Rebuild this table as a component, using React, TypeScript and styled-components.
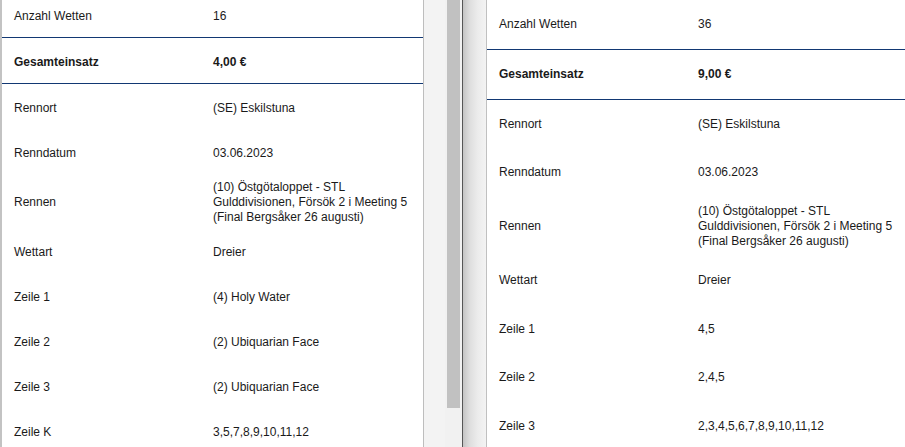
import styled, { createGlobalStyle } from "styled-components";

const GlobalStyle = createGlobalStyle`
  html, body {
    margin: 0;
    padding: 0;
    background: #ffffff;
  }
  body {
    font-family: "Liberation Sans", Arial, sans-serif;
    font-size: 12px;
    color: #1a1a1a;
  }
`;

const Page = styled.div`
  display: flex;
  width: 905px;
  height: 447px;
  overflow: hidden;
`;

const Pane = styled.div<{ $side: "left" | "right" }>`
  background: #ffffff;
  overflow: hidden;
  box-sizing: border-box;
  ${({ $side }) =>
    $side === "left"
      ? `
    width: 424px;
    border-left: 2px solid #c3c3c3;
    border-right: 1px solid #bdbdbd;
  `
      : `
    flex: 1;
    min-width: 0;
  `}
`;

const List = styled.div<{ $offset: number }>`
  margin-top: ${({ $offset }) => $offset}px;
`;

const Row = styled.div<{ $h: number; $pad: number; $shift: number; $line?: boolean; $bold?: boolean }>`
  display: grid;
  grid-template-columns: 199px 1fr;
  align-items: center;
  box-sizing: content-box;
  min-height: ${({ $h, $pad }) => $h - $pad * 2}px;
  padding: ${({ $pad, $shift }) => $pad + $shift}px 8px ${({ $pad, $shift }) => $pad - $shift}px 12px;
  line-height: 15px;
  font-weight: ${({ $bold }) => ($bold ? 700 : 400)};
  border-bottom: ${({ $line }) => ($line ? "1px solid #123873" : "none")};
`;

const Label = styled.div``;

const Value = styled.div``;

const Gutter = styled.div`
  width: 21px;
  background: #f3f3f3;
`;

const Track = styled.div`
  width: 17px;
  background: #f1f1f1;
  display: flex;
  justify-content: center;
`;

const Thumb = styled.div`
  width: 13px;
  height: 408px;
  background: #c1c1c1;
`;

const Divider = styled.div`
  width: 1px;
  background: #555555;
`;

const Shadow = styled.div`
  width: 23px;
  background: linear-gradient(to right, #c4c4c4 0%, #dedede 30%, #ececec 65%, #f3f3f3 100%);
  border-right: 1px solid #c0c0c0;
`;

type Item = { label: string; value: React.ReactNode; line?: boolean; bold?: boolean };

const leftItems: Item[] = [
  { label: "Anzahl Wetten", value: "16", line: true },
  { label: "Gesamteinsatz", value: "4,00 €", line: true, bold: true },
  { label: "Rennort", value: "(SE) Eskilstuna" },
  { label: "Renndatum", value: "03.06.2023" },
  {
    label: "Rennen",
    value: "(10) Östgötaloppet - STL Gulddivisionen, Försök 2 i Meeting 5 (Final Bergsåker 26 augusti)",
  },
  { label: "Wettart", value: "Dreier" },
  { label: "Zeile 1", value: "(4) Holy Water" },
  { label: "Zeile 2", value: "(2) Ubiquarian Face" },
  { label: "Zeile 3", value: "(2) Ubiquarian Face" },
  { label: "Zeile K", value: "3,5,7,8,9,10,11,12" },
];

const rightItems: Item[] = [
  { label: "Anzahl Wetten", value: "36", line: true },
  { label: "Gesamteinsatz", value: "9,00 €", line: true, bold: true },
  { label: "Rennort", value: "(SE) Eskilstuna" },
  { label: "Renndatum", value: "03.06.2023" },
  {
    label: "Rennen",
    value: "(10) Östgötaloppet - STL Gulddivisionen, Försök 2 i Meeting 5 (Final Bergsåker 26 augusti)",
  },
  { label: "Wettart", value: "Dreier" },
  { label: "Zeile 1", value: "4,5" },
  { label: "Zeile 2", value: "2,4,5" },
  { label: "Zeile 3", value: "2,3,4,5,6,7,8,9,10,11,12" },
];

function Details({
  items,
  h,
  pad,
  shift,
  offset,
}: {
  items: Item[];
  h: number;
  pad: number;
  shift: number;
  offset: number;
}) {
  return (
    <List $offset={offset}>
      {items.map((it) => (
        <Row key={it.label} $h={h} $pad={pad} $shift={shift} $line={it.line} $bold={it.bold}>
          <Label>{it.label}</Label>
          <Value>{it.value}</Value>
        </Row>
      ))}
    </List>
  );
}

export default function App() {
  return (
    <>
      <GlobalStyle />
      <Page>
        <Pane $side="left">
          <Details items={leftItems} h={45} pad={4.5} shift={1.5} offset={-8} />
        </Pane>
        <Gutter />
        <Track>
          <Thumb />
        </Track>
        <Divider />
        <Shadow />
        <Pane $side="right">
          <Details items={rightItems} h={48.67} pad={7} shift={0} offset={0.5} />
        </Pane>
      </Page>
    </>
  );
}
